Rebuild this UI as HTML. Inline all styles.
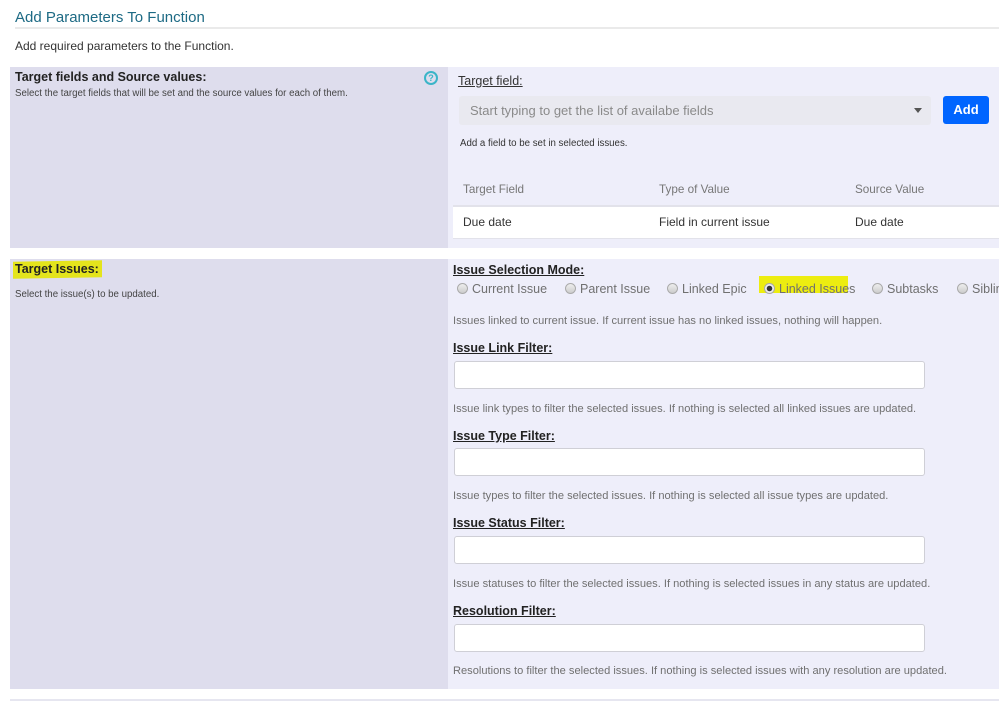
<!DOCTYPE html>
<html><head><meta charset="utf-8"><style>
*{margin:0;padding:0;box-sizing:border-box}
body{width:999px;height:701px;background:#fff;font-family:"Liberation Sans",sans-serif;position:relative;overflow:hidden;color:#333}
.a{position:absolute;white-space:nowrap}
.lc{background:#dedded}
.rc{background:#eeeefa}
.lbl{font-weight:bold;font-size:12.5px;color:#222;text-decoration:underline}
.help{font-size:11.1px;color:#707070}
.inp{position:absolute;left:454px;width:471px;height:28px;background:#fff;border:1px solid #cfcfd6;border-radius:3px}
.rad{display:inline-block;width:11px;height:11px;border-radius:50%;border:1px solid #aaa;background:linear-gradient(#eee,#ccc);vertical-align:-1px;margin-right:4px}
.ro{font-size:12.5px;color:#707070}
</style></head><body>
<div class="a" style="left:15px;top:9px;font-size:15px;color:#1d6a84">Add Parameters To Function</div>
<div class="a" style="left:15px;top:27px;width:984px;height:2px;background:#eaeaea"></div>
<div class="a" style="left:15px;top:39px;font-size:12px;color:#333">Add required parameters to the Function.</div>

<div class="a lc" style="left:10px;top:67px;width:438px;height:181px"></div>
<div class="a rc" style="left:448px;top:67px;width:551px;height:181px"></div>
<div class="a" style="left:15px;top:70px;font-size:12.5px;font-weight:bold;color:#222">Target fields and Source values:</div>
<div class="a" style="left:15px;top:88px;font-size:9.7px;color:#444">Select the target fields that will be set and the source values for each of them.</div>
<div class="a" style="left:424px;top:71px;width:14px;height:14px;border:2px solid #3bb5c8;border-radius:50%;font-size:9px;font-weight:bold;color:#3bb5c8;text-align:center;line-height:10px">?</div>
<div class="a" style="left:458px;top:74px;font-size:12.5px;color:#333;text-decoration:underline">Target field:</div>
<div class="a" style="left:459px;top:96px;width:472px;height:29px;background:#e9e9f0;border-radius:3px"></div>
<div class="a" style="left:470px;top:103px;font-size:13px;color:#8a8a8a">Start typing to get the list of availabe fields</div>
<div class="a" style="left:914px;top:108px;width:0;height:0;border-left:4px solid transparent;border-right:4px solid transparent;border-top:5px solid #555"></div>
<div class="a" style="left:943px;top:96px;width:46px;height:28px;background:#0065ff;border-radius:3px;color:#fff;font-weight:bold;font-size:13px;text-align:center;line-height:28px">Add</div>
<div class="a" style="left:460px;top:138px;font-size:9.7px;color:#333">Add a field to be set in selected issues.</div>
<div class="a" style="left:463px;top:183px;font-size:11.7px;color:#777">Target Field</div>
<div class="a" style="left:659px;top:183px;font-size:11.7px;color:#777">Type of Value</div>
<div class="a" style="left:855px;top:183px;font-size:11.7px;color:#777">Source Value</div>
<div class="a" style="left:453px;top:205px;width:546px;height:34px;background:#fff;border-top:2px solid #e2e2ea;border-bottom:1px solid #e2e2ea"></div>
<div class="a" style="left:463px;top:215px;font-size:12px;color:#333">Due date</div>
<div class="a" style="left:659px;top:215px;font-size:12px;color:#333">Field in current issue</div>
<div class="a" style="left:855px;top:215px;font-size:12px;color:#333">Due date</div>

<div class="a lc" style="left:10px;top:259px;width:438px;height:430px"></div>
<div class="a rc" style="left:448px;top:259px;width:551px;height:430px"></div>
<div class="a" style="left:13px;top:261px;width:89px;height:17px;background:#e4e41c;transform:skewY(-1deg)"></div>
<div class="a" style="left:15px;top:262px;font-size:12.5px;font-weight:bold;color:#222">Target Issues:</div>
<div class="a" style="left:15px;top:289px;font-size:9.7px;color:#444">Select the issue(s) to be updated.</div>
<div class="a lbl" style="left:453px;top:263px">Issue Selection Mode:</div>
<div class="a" style="left:759px;top:276px;width:89px;height:17px;background:#eded10"></div>
<div class="a ro" style="left:457px;top:282px"><span class="rad"></span>Current Issue</div>
<div class="a ro" style="left:565px;top:282px"><span class="rad"></span>Parent Issue</div>
<div class="a ro" style="left:667px;top:282px"><span class="rad"></span>Linked Epic</div>
<div class="a ro" style="left:764px;top:282px"><span class="rad" style="background:radial-gradient(circle,#333 0 2.5px,#eee 3px)"></span>Linked Issues</div>
<div class="a ro" style="left:872px;top:282px"><span class="rad"></span>Subtasks</div>
<div class="a ro" style="left:957px;top:282px"><span class="rad"></span>Siblings</div>
<div class="a help" style="left:453px;top:315px">Issues linked to current issue. If current issue has no linked issues, nothing will happen.</div>

<div class="a lbl" style="left:453px;top:341px">Issue Link Filter:</div>
<div class="inp" style="top:361px"></div>
<div class="a help" style="left:453px;top:403px">Issue link types to filter the selected issues. If nothing is selected all linked issues are updated.</div>

<div class="a lbl" style="left:453px;top:429px">Issue Type Filter:</div>
<div class="inp" style="top:448px"></div>
<div class="a help" style="left:453px;top:490px">Issue types to filter the selected issues. If nothing is selected all issue types are updated.</div>

<div class="a lbl" style="left:453px;top:516px">Issue Status Filter:</div>
<div class="inp" style="top:536px"></div>
<div class="a help" style="left:453px;top:578px">Issue statuses to filter the selected issues. If nothing is selected issues in any status are updated.</div>

<div class="a lbl" style="left:453px;top:604px">Resolution Filter:</div>
<div class="inp" style="top:624px"></div>
<div class="a help" style="left:453px;top:665px">Resolutions to filter the selected issues. If nothing is selected issues with any resolution are updated.</div>

<div class="a" style="left:10px;top:699px;width:989px;height:2px;background:#e6e6f0"></div>
</body></html>
